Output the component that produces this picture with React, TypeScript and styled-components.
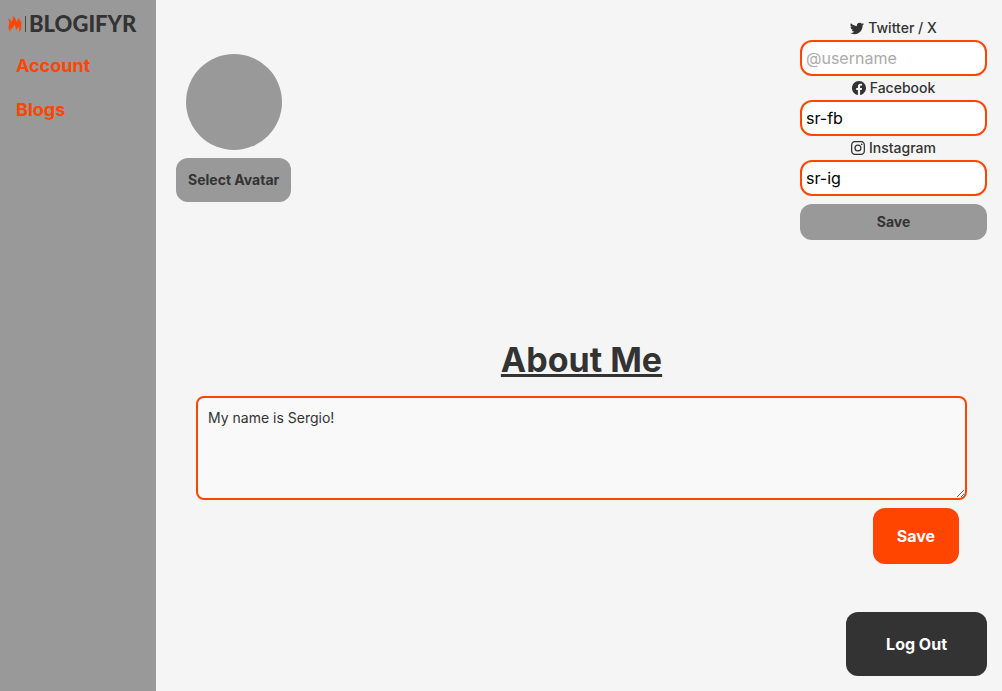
import React, { useState } from 'react';
import styled, { createGlobalStyle } from 'styled-components';
import { BsTwitter, BsFacebook, BsInstagram } from 'react-icons/bs';

const colors = {
  orange: '#ff4500',
  gray: '#999999',
  dark: '#333333',
  page: '#f5f5f5',
};

const GlobalStyle = createGlobalStyle`
  *, *::before, *::after { box-sizing: border-box; }
  body {
    margin: 0;
    background: ${colors.page};
    color: ${colors.dark};
    font-family: Inter, "Liberation Sans", sans-serif;
    font-size: 16px;
    line-height: 24px;
  }
  button, input, textarea { font-family: inherit; margin: 0; }
`;

const Page = styled.div`
  display: flex;
  min-height: 100vh;
`;

const Sidebar = styled.aside`
  flex: 0 0 156px;
  background: ${colors.gray};
  padding: 8px;
`;

const Logo = styled.a`
  display: flex;
  align-items: center;
  height: 32px;
  color: ${colors.dark};
  text-decoration: none;
`;

const LogoMark = styled.svg`
  flex: none;
  display: block;
`;

const LogoText = styled.span`
  font-family: Lato, sans-serif;
  font-size: 22px;
  font-weight: 900;
  line-height: 32px;
`;

const Nav = styled.nav`
  display: flex;
  flex-direction: column;
  gap: 16px;
  padding: 12px 8px;
`;

const NavLink = styled.a`
  color: ${colors.orange};
  font-size: 18px;
  font-weight: 700;
  line-height: 28px;
  text-decoration: none;
`;

const Main = styled.main`
  flex: 1;
  min-width: 0;
  display: flex;
  flex-direction: column;
  padding: 16px 15px 15px 20px;
`;

const Profile = styled.section`
  display: flex;
  justify-content: space-between;
  align-items: flex-start;
`;

const AvatarPicker = styled.div`
  display: flex;
  flex-direction: column;
  align-items: center;
  gap: 8px;
  padding-top: 38px;
`;

const Avatar = styled.div`
  width: 96px;
  height: 96px;
  border-radius: 50%;
  background: ${colors.gray};
`;

const Button = styled.button<{ $tone: 'gray' | 'orange' | 'dark'; $size: 'small' | 'medium' | 'large' | 'xlarge' }>`
  border: 0;
  border-radius: 12px;
  cursor: pointer;
  font-weight: 700;
  background: ${({ $tone }) => colors[$tone]};
  color: ${({ $tone }) => ($tone === 'gray' ? colors.dark : '#ffffff')};
  font-size: ${({ $size }) => ($size === 'small' || $size === 'medium' ? 14 : 16)}px;
  line-height: ${({ $size }) => ($size === 'small' || $size === 'medium' ? 20 : 24)}px;
  padding: ${({ $size }) => ({ small: '8px', medium: '12px', large: '16px 24px', xlarge: '20px 40px' })[$size]};
`;

const SocialForm = styled.form`
  display: flex;
  flex-direction: column;
  width: 187px;
`;

const SocialLabel = styled.label`
  display: flex;
  align-items: center;
  justify-content: center;
  gap: 4px;
  font-size: 14px;
  font-weight: 500;
  line-height: 24px;
`;

const SocialInput = styled.input`
  width: 100%;
  height: 36px;
  padding: 4px;
  border: 2px solid ${colors.orange};
  border-radius: 12px;
  background: #ffffff;
  color: #000000;
  font-size: 16px;
  &::placeholder { color: #aaaaaa; opacity: 1; }
`;

const SocialActions = styled.div`
  display: grid;
  padding-top: 8px;
`;

const About = styled.form`
  display: flex;
  flex-direction: column;
  padding: 100px 20px 0;
`;

const AboutTitle = styled.h1`
  margin: 0 0 16px;
  font-size: 34px;
  font-weight: 700;
  line-height: 40px;
  text-align: center;
  text-decoration: underline;
`;

const AboutText = styled.textarea`
  display: block;
  width: 100%;
  height: 104px;
  padding: 10px;
  border: 2px solid ${colors.orange};
  border-radius: 8px;
  background: #f9f9f9;
  color: ${colors.dark};
  font-size: 14px;
  line-height: 20px;
  resize: both;
`;

const AboutActions = styled.div`
  display: flex;
  justify-content: flex-end;
  padding: 8px 8px 0;
`;

const Footer = styled.footer`
  display: flex;
  justify-content: flex-end;
  padding-top: 48px;
`;

const socials = [
  { id: 'twitter', label: 'Twitter / X', Icon: BsTwitter, value: '' },
  { id: 'facebook', label: 'Facebook', Icon: BsFacebook, value: 'sr-fb' },
  { id: 'instagram', label: 'Instagram', Icon: BsInstagram, value: 'sr-ig' },
];

const stay = (event: React.FormEvent) => event.preventDefault();

export default function App() {
  const [about, setAbout] = useState('My name is Sergio!');

  return (
    <>
      <GlobalStyle />
      <Page>
        <Sidebar>
          <Logo href="#home">
            <LogoMark width="21" height="20" viewBox="0 0 21 20" aria-hidden="true">
              <path
                fill={colors.orange}
                d="M2.4 18.2C1.2 16.4 .3 14.4 .6 12.2C.9 10.6 1.7 9.4 1.2 7.4C1 6.2 .5 5.4 0 4.4C2 5 3.2 6.4 3.4 8.2C4.6 6.6 5.2 4.4 4.8 2C7 3.4 8.4 5.6 8.6 8.2C9.5 6.8 9.7 5 11 3.4C11 5.2 12.2 6.4 12.3 8C12.8 7.4 13 6.6 12.8 5.8C14.1 8 13 9.6 13.2 11.2C13.5 13.6 13.6 16 11 18C11.4 15.8 11.5 14 10.6 12.2C10.1 13.8 9.5 15 8 16C7.9 14 7.4 12 6.4 10.8C6.1 12.8 4.4 13.4 3.8 15.4C3.4 15 3.1 14.4 3 13.8C2.3 15.2 2.1 16.6 2.4 18.2Z"
              />
              <path stroke={colors.dark} strokeOpacity="0.8" strokeWidth="1" d="M17.5 2V18" />
            </LogoMark>
            <LogoText>BLOGIFYR</LogoText>
          </Logo>
          <Nav>
            <NavLink href="#account">Account</NavLink>
            <NavLink href="#blogs">Blogs</NavLink>
          </Nav>
        </Sidebar>
        <Main>
          <Profile>
            <AvatarPicker>
              <Avatar />
              <Button type="button" $tone="gray" $size="medium">Select Avatar</Button>
            </AvatarPicker>
            <SocialForm onSubmit={stay}>
              {socials.map(({ id, label, Icon, value }) => (
                <React.Fragment key={id}>
                  <SocialLabel htmlFor={id}>
                    <Icon size={14} aria-hidden="true" />
                    {label}
                  </SocialLabel>
                  <SocialInput id={id} type="text" placeholder="@username" defaultValue={value} />
                </React.Fragment>
              ))}
              <SocialActions>
                <Button type="submit" $tone="gray" $size="small">Save</Button>
              </SocialActions>
            </SocialForm>
          </Profile>
          <About onSubmit={stay}>
            <AboutTitle id="about-title">About Me</AboutTitle>
            <AboutText
              aria-labelledby="about-title"
              value={about}
              onChange={(event) => setAbout(event.target.value)}
            />
            <AboutActions>
              <Button type="submit" $tone="orange" $size="large">Save</Button>
            </AboutActions>
          </About>
          <Footer>
            <Button type="button" $tone="dark" $size="xlarge">Log Out</Button>
          </Footer>
        </Main>
      </Page>
    </>
  );
}
